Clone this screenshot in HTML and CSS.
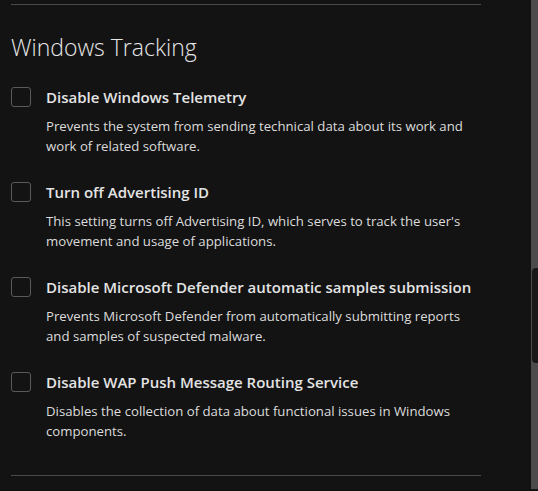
FILE: index.html
```html
<!DOCTYPE html>
<html lang="en">
<head>
<meta charset="utf-8">
<link rel="stylesheet" href="styles.css">
</head>
<body>
<div class="frame">
  <main class="content">
    <section class="section">
      <h2 class="title">Windows Tracking</h2>
      <div class="item">
        <span class="check"></span>
        <div class="text">
          <div class="head">Disable Windows Telemetry</div>
          <p class="desc">Prevents the system from sending technical data about its work and work of related software.</p>
        </div>
      </div>
      <div class="item">
        <span class="check"></span>
        <div class="text">
          <div class="head">Turn off Advertising ID</div>
          <p class="desc">This setting turns off Advertising ID, which serves to track the user's movement and usage of applications.</p>
        </div>
      </div>
      <div class="item">
        <span class="check"></span>
        <div class="text">
          <div class="head">Disable Microsoft Defender automatic samples submission</div>
          <p class="desc">Prevents Microsoft Defender from automatically submitting reports and samples of suspected malware.</p>
        </div>
      </div>
      <div class="item">
        <span class="check"></span>
        <div class="text">
          <div class="head">Disable WAP Push Message Routing Service</div>
          <p class="desc">Disables the collection of data about functional issues in Windows components.</p>
        </div>
      </div>
    </section>
  </main>
  <div class="scrollbar"><div class="thumb"></div></div>
</div>
</body>
</html>
```

FILE: styles.css
```css
html, body {
  margin: 0;
  padding: 0;
  background: #131313;
  height: 100%;
  overflow: hidden;
}
.frame {
  display: flex;
  height: 489px;
  border-bottom: 2px solid #111;
}
.content {
  flex: 1;
  padding: 4px 0 0 11px;
}
.section {
  width: 470px;
  border-top: 1px solid #4a4a4a;
  border-bottom: 1px solid #4a4a4a;
  padding-bottom: 34px;
  font-family: "Open Sans", "Noto Sans", sans-serif;
}
.title {
  margin: 26px 0 24px;
  font-size: 23px;
  line-height: 32px;
  font-weight: 300;
  color: #e6e6e6;
}
.item {
  display: flex;
  gap: 15px;
  margin-bottom: 26px;
}
.item:last-child {
  margin-bottom: 0;
}
.check {
  flex: none;
  width: 18px;
  height: 18px;
  border: 1px solid #5a5a5a;
  border-radius: 3px;
}
.text {
  flex: 1;
}
.head {
  font-size: 15px;
  line-height: 20px;
  font-weight: 600;
  color: #e4e4e4;
}
.desc {
  margin: 9px 0 0;
  font-size: 13.2px;
  line-height: 20px;
  color: #dcdcdc;
}
.scrollbar {
  flex: none;
  width: 7px;
  background: #4b4b4b;
  position: relative;
}
.thumb {
  position: absolute;
  top: 268px;
  left: 1px;
  right: 0;
  height: 95px;
  background: #181818;
  border-radius: 4px 0 0 4px;
}
```
